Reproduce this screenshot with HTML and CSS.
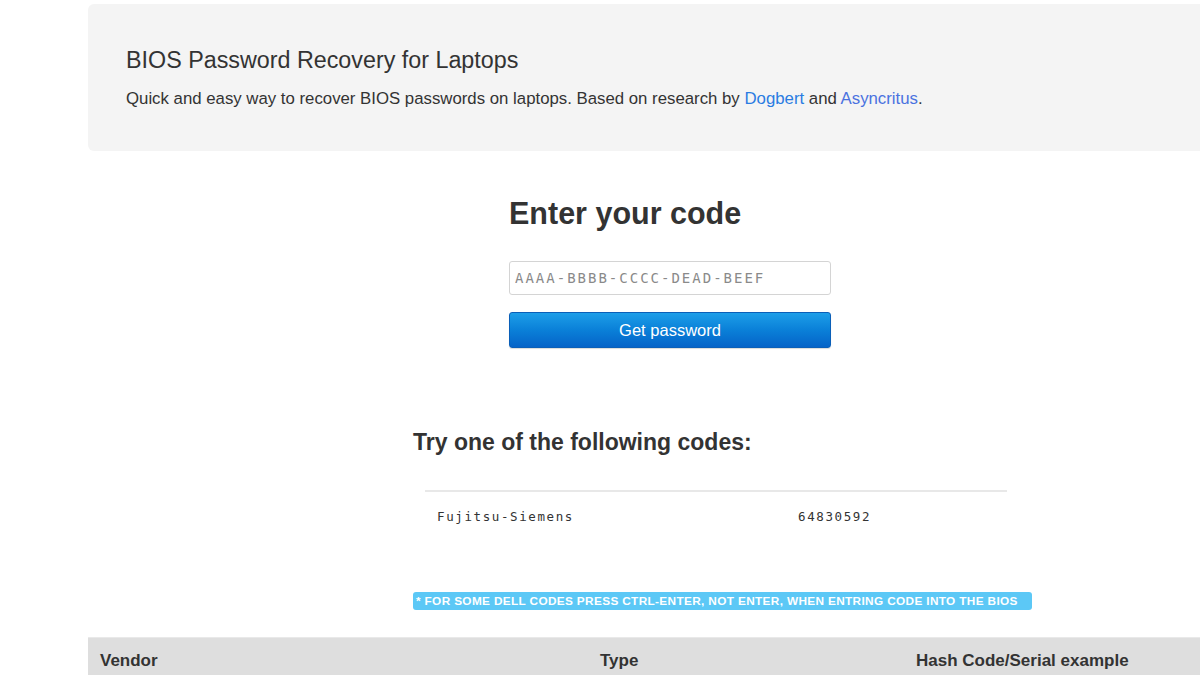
FILE: index.html
```html
<!DOCTYPE html>
<html>
<head>
<meta charset="utf-8">
<link rel="stylesheet" href="styles.css">
</head>
<body>
<div class="page">
  <header class="jumbotron">
    <h1 class="title">BIOS Password Recovery for Laptops</h1>
    <p class="lead">Quick and easy way to recover BIOS passwords on laptops. Based on research by <a class="link" href="#">Dogbert</a> and <a class="link link-visited" href="#">Asyncritus</a>.</p>
  </header>

  <section class="form">
    <h2 class="form-title">Enter your code</h2>
    <input class="code-input" type="text" placeholder="AAAA-BBBB-CCCC-DEAD-BEEF">
    <button class="btn" type="button">Get password</button>
  </section>

  <section class="codes">
    <h3 class="codes-title">Try one of the following codes:</h3>
    <div class="codes-table">
      <div class="codes-row">
        <span class="codes-vendor">Fujitsu-Siemens</span>
        <span class="codes-value">64830592</span>
      </div>
    </div>
    <div class="notice">* FOR SOME DELL CODES PRESS CTRL-ENTER, NOT ENTER, WHEN ENTRING CODE INTO THE BIOS</div>
  </section>

  <div class="table-head">
    <span class="th th-vendor">Vendor</span>
    <span class="th th-type">Type</span>
    <span class="th th-hash">Hash Code/Serial example</span>
  </div>
</div>
</body>
</html>
```

FILE: styles.css
```css
html, body {
  margin: 0;
  padding: 0;
  background: #fff;
  overflow: hidden;
}
body {
  font-family: "Liberation Sans", Arial, sans-serif;
  color: #333;
  width: 1200px;
  height: 675px;
}
.page {
  padding: 4px 0 0 88px;
}
.jumbotron {
  background: #f4f4f4;
  border-radius: 6px 0 0 6px;
  height: 147px;
  box-sizing: border-box;
  padding: 43px 0 0 38px;
}
.title {
  margin: 0;
  font-size: 23.3px;
  font-weight: normal;
  line-height: 26px;
  color: #333;
}
.lead {
  margin: 16px 0 0;
  font-size: 16.8px;
  line-height: 20px;
  color: #333;
}
.link {
  color: #2a7ce2;
  text-decoration: none;
}
.link-visited {
  color: #4a72e0;
}
.form {
  margin: 44px 0 0 421px;
  width: 322px;
  display: flex;
  flex-direction: column;
}
.form-title {
  margin: 0;
  font-size: 30.5px;
  line-height: 36px;
  font-weight: bold;
  color: #333;
}
.code-input {
  margin-top: 30px;
  height: 34px;
  box-sizing: border-box;
  border: 1px solid #d4d4d4;
  border-radius: 3px;
  padding: 0 5px;
  font-family: "DejaVu Sans Mono", "Liberation Mono", monospace;
  font-size: 14px;
  letter-spacing: 2px;
  color: #333;
  background: #fff;
  outline: none;
}
.code-input::placeholder {
  color: #8a8a8a;
}
.btn {
  margin-top: 17px;
  height: 36px;
  border: 1px solid #0a5fb8;
  border-radius: 3px;
  background: linear-gradient(to bottom, #1d9ee8 0%, #0a80d8 50%, #0563c8 100%);
  color: #fff;
  font-family: "Liberation Sans", Arial, sans-serif;
  font-size: 16.5px;
  padding: 0;
  box-shadow: 0 1px 1px rgba(0,0,0,0.15);
}
.codes {
  margin: 80px 0 0 325px;
}
.codes-title {
  margin: 0;
  font-size: 23px;
  line-height: 28px;
  font-weight: bold;
  color: #333;
}
.codes-table {
  margin: 34px 0 0 12px;
  width: 582px;
  border-top: 2px solid #e8e8e8;
}
.codes-row {
  display: flex;
  padding: 15px 12px 0;
  height: 20px;
  font-family: "DejaVu Sans Mono", "Liberation Mono", monospace;
  font-size: 12.5px;
  letter-spacing: 1.6px;
  line-height: 20px;
  color: #333;
}
.codes-vendor {
  width: 361px;
}
.notice {
  margin-top: 65px;
  display: inline-block;
  background: #5cc8f6;
  color: #fff;
  border-radius: 3px;
  font-family: "Liberation Sans", Arial, sans-serif;
  font-weight: bold;
  font-size: 11.8px;
  letter-spacing: 0.35px;
  line-height: 18px;
  padding: 0 3px;
  width: 613px;
  white-space: nowrap;
  overflow: hidden;
}
.table-head {
  margin-top: 23px;
  height: 50px;
  background: #dedede;
  border-top: 1px solid #e9e9e9;
  display: flex;
  align-items: center;
}
.th {
  font-family: "Liberation Sans", Arial, sans-serif;
  font-weight: bold;
  font-size: 17px;
  color: #333;
  line-height: 20px;
  padding-bottom: 4px;
}
.th-vendor {
  margin-left: 12px;
  width: 500px;
}
.th-type {
  width: 316px;
}
```
